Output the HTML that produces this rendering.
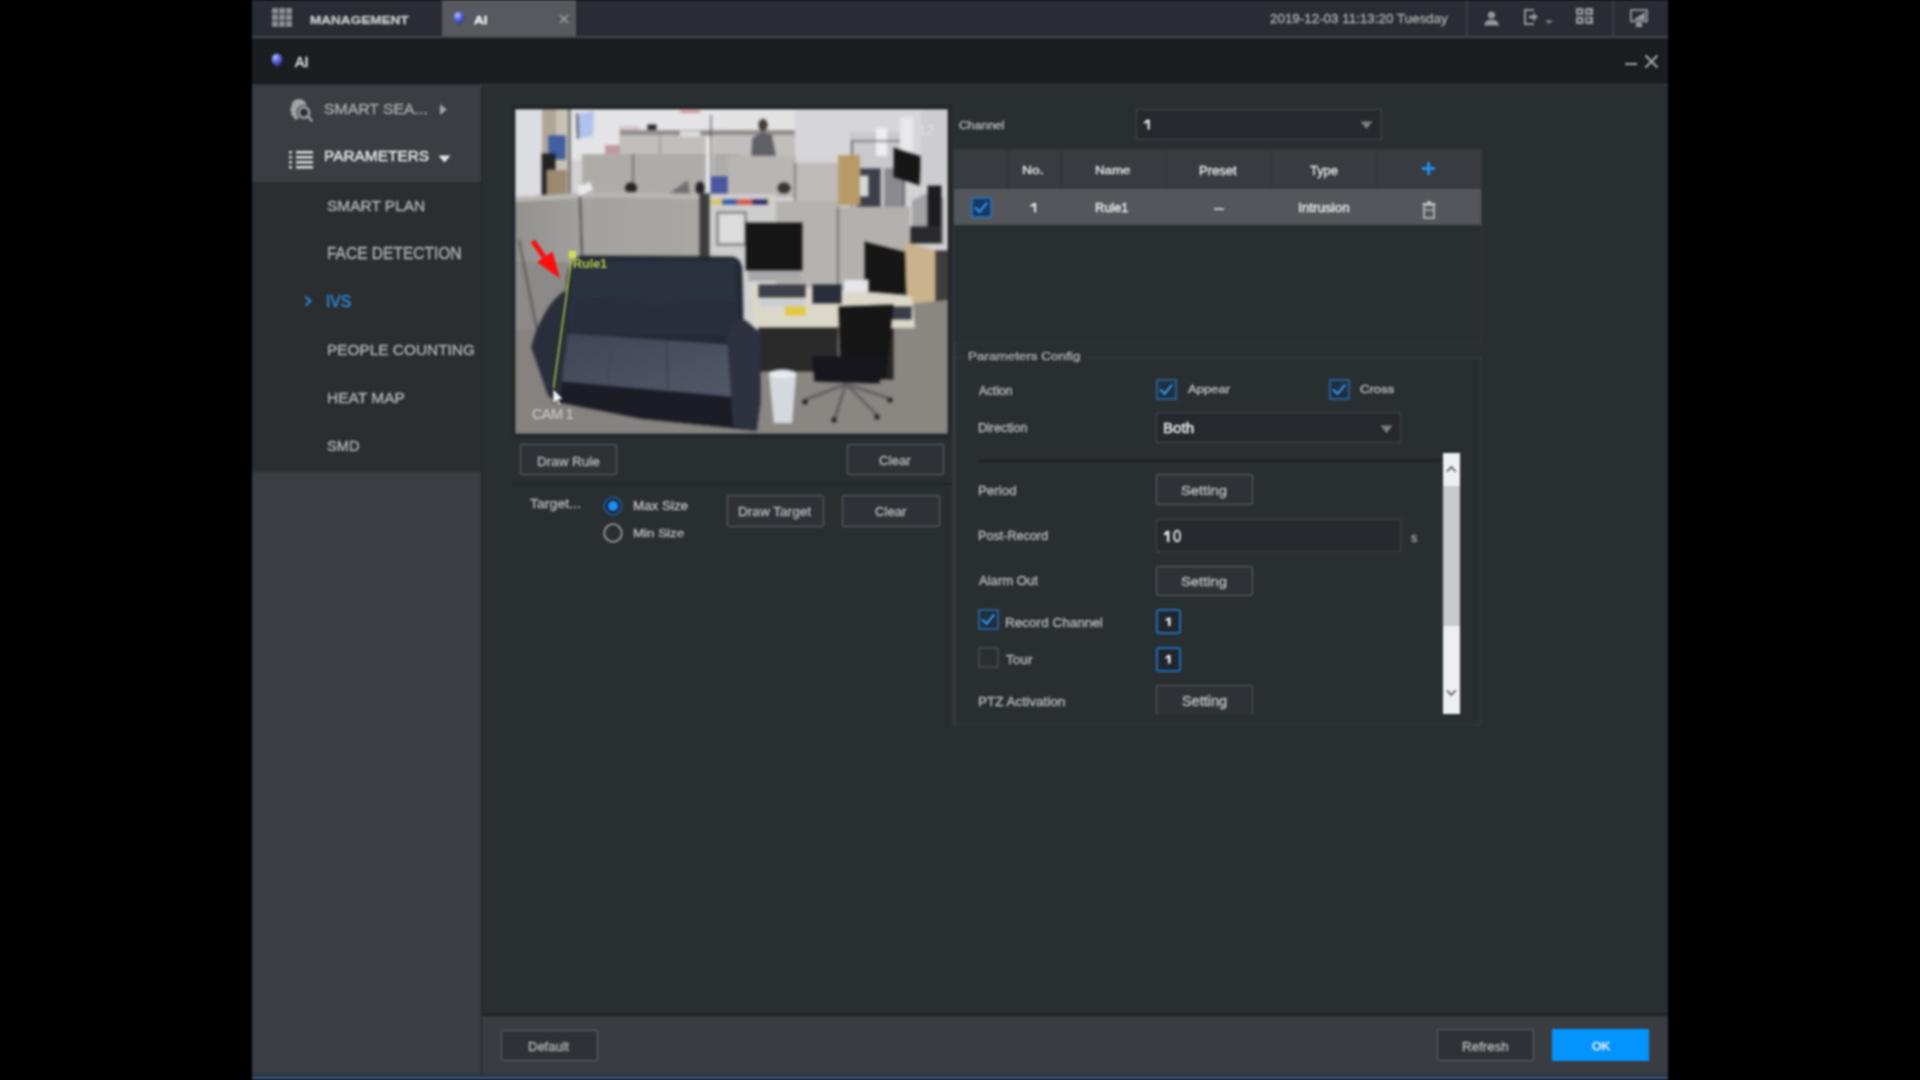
<!DOCTYPE html>
<html><head><meta charset="utf-8"><title>AI</title>
<style>
html,body{margin:0;padding:0;width:1920px;height:1080px;overflow:hidden;background:#000;}
body{position:relative;font-family:"Liberation Sans",sans-serif;}
.a{position:absolute;}
.t{white-space:nowrap;-webkit-text-stroke:0.4px currentColor;}
#root{position:absolute;left:0;top:0;width:1920px;height:1080px;filter:blur(0.8px);}
</style></head><body><div id="root">
<div class="a" style="left:0px;top:0px;width:1920px;height:1080px;background:#000;"></div>
<div class="a" style="left:252px;top:0px;width:1416px;height:36px;background:#292c33;"></div>
<div class="a" style="left:252px;top:36px;width:1416px;height:2px;background:#45484d;"></div>
<div class="a" style="left:442px;top:0px;width:134px;height:36px;background:#57595e;"></div>
<div class="a" style="left:252px;top:38px;width:1416px;height:46px;background:#1b1e21;"></div>
<div class="a" style="left:252px;top:84px;width:1416px;height:2px;background:#33363b;"></div>
<div class="a" style="left:252px;top:86px;width:229px;height:96px;background:#3a3d42;"></div>
<div class="a" style="left:252px;top:182px;width:229px;height:290px;background:#2a2e31;"></div>
<div class="a" style="left:252px;top:472px;width:229px;height:608px;background:#3a3d42;"></div>
<div class="a" style="left:480.5px;top:86px;width:3.0px;height:994px;background:#222629;"></div>
<div class="a" style="left:482px;top:86px;width:1186px;height:927px;background:#292e31;"></div>
<div class="a" style="left:482px;top:1013px;width:1186px;height:3px;background:#1f2226;"></div>
<div class="a" style="left:482px;top:1016px;width:1186px;height:58px;background:#393c41;"></div>
<div class="a" style="left:252px;top:1072.5px;width:1416px;height:1.5px;background:#36383b;"></div>
<div class="a" style="left:252px;top:1074px;width:1416px;height:2.5px;background:#2b3745;"></div>
<div class="a" style="left:252px;top:1076.5px;width:1416px;height:2.0px;background:#3b5878;"></div>
<div class="a" style="left:252px;top:1078.5px;width:1416px;height:1.5px;background:#15304f;"></div>
<svg class="a" style="left:272px;top:8px;" width="21" height="20" viewBox="0 0 21 20"><rect x="0" y="0.0" width="6" height="5.6" fill="#8c8e92"/><rect x="7" y="0.0" width="6" height="5.6" fill="#8c8e92"/><rect x="14" y="0.0" width="6" height="5.6" fill="#8c8e92"/><rect x="0" y="6.6" width="6" height="5.6" fill="#8c8e92"/><rect x="7" y="6.6" width="6" height="5.6" fill="#8c8e92"/><rect x="14" y="6.6" width="6" height="5.6" fill="#8c8e92"/><rect x="0" y="13.2" width="6" height="5.6" fill="#8c8e92"/><rect x="7" y="13.2" width="6" height="5.6" fill="#8c8e92"/><rect x="14" y="13.2" width="6" height="5.6" fill="#8c8e92"/></svg>
<div class="a t" style="left:309.95px;top:15.06px;font-size:10.87px;line-height:10.87px;color:#c2c2c4;transform:scaleX(1.2484);transform-origin:0 0;font-weight:bold;">MANAGEMENT</div>
<svg class="a" style="left:453px;top:11px;" width="12" height="16" viewBox="0 0 12 16"><defs><radialGradient id="bg1" cx="0.35" cy="0.3" r="0.8"><stop offset="0" stop-color="#b8c0ff"/><stop offset="0.5" stop-color="#5a63d8"/><stop offset="1" stop-color="#2a2f90"/></radialGradient></defs><ellipse cx="6" cy="6.5" rx="5.5" ry="6" fill="url(#bg1)"/><path d="M4.5 12 L6 15 L7 12 Z" fill="#3a3fa0"/></svg>
<div class="a t" style="left:474.49px;top:15.98px;font-size:10.14px;line-height:10.14px;color:#ececec;transform:scaleX(1.3362);transform-origin:0 0;font-weight:bold;">AI</div>
<svg class="a" style="left:559px;top:14px;" width="10" height="10" viewBox="0 0 10 10"><path d="M1 1 L9 9 M9 1 L1 9" stroke="#a0a0a2" stroke-width="1.6"/></svg>
<div class="a t" style="left:1270.23px;top:12.21px;font-size:13.04px;line-height:13.04px;color:#a9a9ab;transform:scaleX(1.0276);transform-origin:0 0;">2019-12-03 11:13:20 Tuesday</div>
<div class="a" style="left:1466px;top:0px;width:2px;height:36px;background:#3a3d42;"></div>
<div class="a" style="left:1612px;top:0px;width:2px;height:36px;background:#3a3d42;"></div>
<svg class="a" style="left:1483px;top:10px;" width="17" height="17" viewBox="0 0 17 17"><circle cx="8.5" cy="5" r="3.6" fill="#96979b"/><path d="M1 15.5 Q2 9.5 8.5 9.5 Q15 9.5 16 15.5 Z" fill="#96979b"/></svg>
<svg class="a" style="left:1523px;top:8px;" width="32" height="18" viewBox="0 0 32 18"><path d="M11 2 H2 V16 H11" fill="none" stroke="#96979b" stroke-width="2"/><path d="M6 7.5 H10 V4.5 L15 9 L10 13.5 V10.5 H6 Z" fill="#96979b"/><path d="M22 12.5 H30 L26 15.5 Z" fill="#96979b"/></svg>
<svg class="a" style="left:1576px;top:8px;" width="17" height="16" viewBox="0 0 17 16"><rect x="0" y="0" width="17" height="16" fill="#96979b"/><rect x="7.5" y="0" width="1.6" height="16" fill="#292c33"/><rect x="0" y="7" width="17" height="1.6" fill="#292c33"/><rect x="2.5" y="2.5" width="2.5" height="2.5" fill="#292c33"/><rect x="11.5" y="2.5" width="2.5" height="2.5" fill="#292c33"/><rect x="2.5" y="11" width="2.5" height="2.5" fill="#292c33"/><rect x="11" y="10.5" width="3" height="3" fill="#292c33"/></svg>
<svg class="a" style="left:1629px;top:8px;" width="20" height="20" viewBox="0 0 20 20"><rect x="2" y="2" width="16" height="11.5" fill="none" stroke="#96979b" stroke-width="1.8"/><path d="M4 12 L16 4 V12 Z" fill="#96979b"/><path d="M7.5 14.5 H12.5 L13.5 19 H6.5 Z" fill="#96979b"/></svg>
<svg class="a" style="left:271px;top:53px;" width="13" height="17" viewBox="0 0 13 17"><defs><radialGradient id="bg2" cx="0.35" cy="0.3" r="0.8"><stop offset="0" stop-color="#b8c0ff"/><stop offset="0.5" stop-color="#5a63d8"/><stop offset="1" stop-color="#2a2f90"/></radialGradient></defs><ellipse cx="6" cy="6.5" rx="5.5" ry="6" fill="url(#bg2)"/><path d="M4.5 12 L6 15 L7 12 Z" fill="#3a3fa0"/></svg>
<div class="a t" style="left:294.90px;top:54.85px;font-size:14.06px;line-height:14.06px;color:#e4e4e4;transform:scaleX(1.0210);transform-origin:0 0;">AI</div>
<div class="a" style="left:1625px;top:62.5px;width:12px;height:2.0px;background:#a0a0a2;"></div>
<svg class="a" style="left:1644px;top:54px;" width="15" height="15" viewBox="0 0 15 15"><path d="M1.5 1.5 L13.5 13.5 M13.5 1.5 L1.5 13.5" stroke="#a8a8aa" stroke-width="2"/></svg>
<svg class="a" style="left:289px;top:98px;" width="25" height="25" viewBox="0 0 25 25"><path d="M9.5 1 Q16.5 1 17.5 7.5 L17 9 Q11.5 8.5 9.5 13 Q8.5 17 10.5 20.5 L5.5 21.5 Q5.5 19 3.5 18 Q1.5 17 2.5 14 L1 12 Q2.5 10 2.5 8 Q3 1.5 9.5 1 Z" fill="#a2a3a6"/><circle cx="15" cy="14.5" r="7.6" fill="#3a3d42"/><circle cx="15" cy="14.5" r="5.2" fill="#2f3236" stroke="#a2a3a6" stroke-width="2.4"/><path d="M19 18.5 L22.5 22.5" stroke="#a2a3a6" stroke-width="2.6" stroke-linecap="round"/></svg>
<div class="a t" style="left:324.11px;top:101.85px;font-size:14.06px;line-height:14.06px;color:#a6a7a9;transform:scaleX(1.1233);transform-origin:0 0;">SMART SEA...</div>
<svg class="a" style="left:439px;top:103px;" width="9" height="13" viewBox="0 0 9 13"><path d="M1 1 L8 6.5 L1 12 Z" fill="#a2a3a6"/></svg>
<svg class="a" style="left:289px;top:150px;" width="25" height="20" viewBox="0 0 25 20"><rect x="0" y="1" width="3" height="2.5" fill="#d8d8d8"/><rect x="7" y="1" width="17" height="2.5" fill="#e0e0e0"/><rect x="0" y="6" width="3" height="2.5" fill="#d8d8d8"/><rect x="7" y="6" width="17" height="2.5" fill="#e0e0e0"/><rect x="0" y="11" width="3" height="2.5" fill="#d8d8d8"/><rect x="7" y="11" width="17" height="2.5" fill="#e0e0e0"/><rect x="0" y="16" width="3" height="2.5" fill="#d8d8d8"/><rect x="7" y="16" width="17" height="2.5" fill="#e0e0e0"/></svg>
<div class="a t" style="left:323.67px;top:148.42px;font-size:15.51px;line-height:15.51px;color:#e8e8e8;transform:scaleX(0.9948);transform-origin:0 0;">PARAMETERS</div>
<svg class="a" style="left:438px;top:155px;" width="13" height="8" viewBox="0 0 13 8"><path d="M0.5 0.5 H12.5 L6.5 7.5 Z" fill="#e6e6e6"/></svg>
<div class="a t" style="left:327.13px;top:198.67px;font-size:14.57px;line-height:14.57px;color:#b0b1b3;transform:scaleX(1.0619);transform-origin:0 0;">SMART PLAN</div>
<div class="a t" style="left:326.66px;top:245.30px;font-size:16.23px;line-height:16.23px;color:#b0b1b3;transform:scaleX(0.9570);transform-origin:0 0;">FACE DETECTION</div>
<div class="a t" style="left:326.67px;top:342.42px;font-size:15.51px;line-height:15.51px;color:#b0b1b3;transform:scaleX(0.9925);transform-origin:0 0;">PEOPLE COUNTING</div>
<div class="a t" style="left:326.66px;top:390.42px;font-size:15.51px;line-height:15.51px;color:#b0b1b3;transform:scaleX(1.0022);transform-origin:0 0;">HEAT MAP</div>
<div class="a t" style="left:327.17px;top:438.42px;font-size:15.51px;line-height:15.51px;color:#b0b1b3;transform:scaleX(0.9446);transform-origin:0 0;">SMD</div>
<div class="a t" style="left:326.49px;top:293.30px;font-size:16.23px;line-height:16.23px;color:#2e8bd6;transform:scaleX(0.9657);transform-origin:0 0;">IVS</div>
<svg class="a" style="left:304px;top:295px;" width="9" height="12" viewBox="0 0 9 12"><path d="M1.5 1.5 L6.5 6 L1.5 10.5" fill="none" stroke="#2e8bd6" stroke-width="2"/></svg>
<div class="a" style="left:512px;top:104.5px;width:439.5px;height:333.0px;background:#24272b;"></div>
<svg class="a" style="left:515px;top:109px;" width="433" height="325" viewBox="0 0 433 325"><defs><filter id="cb" x="-5%" y="-5%" width="110%" height="110%"><feGaussianBlur stdDeviation="1.3"/></filter><clipPath id="cc"><rect x="0" y="0" width="433" height="325"/></clipPath></defs><g clip-path="url(#cc)"><g transform="translate(-515,-109)"><g filter="url(#cb)"><rect x="515" y="109" width="433" height="325" fill="#d2d2d3" /><rect x="515" y="109" width="433" height="51" fill="#e2e2e3" /><rect x="515" y="109" width="27" height="91" fill="#dcdde0" /><rect x="542" y="109" width="14" height="88" fill="#aea696" /><rect x="556" y="109" width="12" height="88" fill="#c8c2b4" /><rect x="568" y="109" width="3" height="88" fill="#6a6a6a" /><rect x="548" y="135" width="18" height="25" fill="#4060a0" /><rect x="541" y="153" width="15" height="43" fill="#222222" /><rect x="547" y="170" width="20" height="26" fill="#9a8a70" /><rect x="571" y="109" width="149" height="47" fill="#e4e4e6" /><polygon points="576,114 594,111 593,136 577,139" fill="#b0c3ee" /><line x1="577" y1="113" x2="578" y2="139" stroke="#3a3e4a" stroke-width="2.2" /><rect x="619" y="126" width="21" height="24" fill="#d8c4cc" /><rect x="605" y="145" width="20" height="13" fill="#c09aa0" /><rect x="680" y="110" width="20" height="3" fill="#d88a90" /><rect x="620" y="130" width="252" height="26" fill="#c1bfbc" /><rect x="620" y="130" width="252" height="5" fill="#8e8c8a" /><line x1="660" y1="130" x2="660" y2="156" stroke="#8a8886" stroke-width="1.2" /><rect x="647" y="124" width="10" height="6" fill="#202020" /><rect x="680" y="131" width="20" height="6" fill="#dadada" /><polygon points="751,160 752,138 762,132 772,135 777,160" fill="#5e6066" /><ellipse cx="763" cy="125" rx="5" ry="6.5" fill="#4a3b30"/><rect x="795" y="109" width="153" height="51" fill="#d6d6d8" /><rect x="582" y="154" width="158" height="41" fill="#aeaca9" /><line x1="633" y1="154" x2="633" y2="195" stroke="#5a5856" stroke-width="1.6" /><rect x="728" y="156" width="68" height="41" fill="#b8b6b3" /><rect x="795" y="163" width="55" height="43" fill="#bdbbb8" /><line x1="795" y1="163" x2="795" y2="206" stroke="#6a6866" stroke-width="1.6" /><ellipse cx="631" cy="188" rx="6.5" ry="6" fill="#252220"/><ellipse cx="784" cy="188" rx="7" ry="6" fill="#3a3430"/><polygon points="668,194 688,180 690,195" fill="#707072" /><ellipse cx="700" cy="188" rx="5" ry="7" fill="#242426"/><rect x="706" y="137" width="7" height="58" fill="#e8e8ea" /><line x1="711" y1="115" x2="711" y2="190" stroke="#4a4a40" stroke-width="1.5" /><rect x="710" y="176" width="18" height="19" fill="#4c56a0" /><rect x="850" y="132" width="56" height="84" fill="#c9c9cc" /><rect x="856" y="168" width="25" height="44" fill="#3c404c" /><rect x="860" y="176" width="8" height="20" fill="#d8d8dc" /><rect x="884" y="168" width="21" height="46" fill="#8a8a8e" /><rect x="876" y="128" width="11" height="28" fill="#eeeef0" /><line x1="852" y1="140" x2="852" y2="216" stroke="#55555a" stroke-width="2" /><line x1="904" y1="140" x2="904" y2="216" stroke="#55555a" stroke-width="1.6" /><line x1="852" y1="141" x2="904" y2="141" stroke="#55555a" stroke-width="1.6" /><rect x="838" y="155" width="22" height="50" fill="#b89a66" /><polygon points="893,147 921,156 920,186 893,177" fill="#151515" /><polygon points="928,185 942,190 942,214 928,208" fill="#1c1c1c" /><rect x="921" y="109" width="27" height="76" fill="#cdcdcf" /><rect x="900" y="117" width="13" height="35" fill="#e8e8ea" /><polygon points="893,147 921,156 920,186 893,177" fill="#151515" /><polygon points="912,200 930,192 944,198 944,244 912,244" fill="#a2a2a4" /><rect x="927" y="185" width="15" height="41" fill="#1e1e20" /><rect x="910" y="226" width="32" height="18" fill="#2a2a2e" /><defs><linearGradient id="fpg" x1="0" y1="0" x2="1" y2="0"><stop offset="0" stop-color="#92918f"/><stop offset="0.4" stop-color="#a4a29f"/><stop offset="1" stop-color="#a9a7a4"/></linearGradient></defs><polygon points="515,197 600,192 700,194 700,262 515,262" fill="url(#fpg)" /><polygon points="515,197 600,192 700,194 700,199 600,197 515,202" fill="#b9b7b4" /><rect x="699" y="193" width="11" height="69" fill="#3e3e40" /><polygon points="577,187 590,182 593,190 579,196" fill="#eaeaec" /><line x1="580" y1="196" x2="582" y2="258" stroke="#262626" stroke-width="1.8" /><rect x="710" y="194" width="66" height="68" fill="#cdcdce" /><rect x="711" y="199" width="59" height="6" fill="#d8c860" /><rect x="722" y="199" width="15" height="6" fill="#2f60aa" /><rect x="737" y="199" width="15" height="6" fill="#d85a4a" /><rect x="752" y="199" width="16" height="6" fill="#2a2a6a" /><rect x="716" y="211" width="31" height="35" fill="#8a8a8c" /><rect x="719" y="214" width="25" height="29" fill="#dcdcdc" /><rect x="776" y="201" width="62" height="99" fill="#b5b3af" /><rect x="838" y="207" width="72" height="93" fill="#b3b1ad" /><line x1="838" y1="207" x2="838" y2="300" stroke="#6a6866" stroke-width="2" /><rect x="745" y="222" width="58" height="49" fill="#121212" /><rect x="748" y="271" width="53" height="10" fill="#a8a8aa" /><polygon points="864,241 907,252 907,296 864,292" fill="#161616" /><polygon points="905,242 935,250 936,318 907,308" fill="#c9b28c" /><rect x="935" y="250" width="13" height="72" fill="#3c3c3e" /><polygon points="515,262 570,262 566,290 532,345 548,400 515,400" fill="#8b8a88" /><line x1="519" y1="240" x2="537" y2="330" stroke="#3e3e3e" stroke-width="1.6" /><polygon points="515,330 540,330 548,400 560,404 640,420 760,434 515,434" fill="#85827f" /><rect x="540" y="395" width="220" height="39" fill="#85827f" /><polygon points="758,320 948,300 948,434 758,434" fill="#8a8682" /><polygon points="752,283 912,296 915,328 753,327" fill="#dcd8c9" /><rect x="758" y="284" width="48" height="14" fill="#3c404c" /><rect x="760" y="300" width="45" height="6" fill="#c8ccd4" /><rect x="812" y="284" width="30" height="20" fill="#2a2e3a" /><rect x="844" y="280" width="24" height="12" fill="#e4e6ea" /><rect x="785" y="306" width="21" height="10" fill="#e2ca40" /><rect x="888" y="306" width="24" height="14" fill="#3a3e4a" /><rect x="758" y="327" width="80" height="45" fill="#2a2a2c" /><rect x="880" y="328" width="14" height="52" fill="#262628" /><polygon points="838,306 894,304 886,378 840,376" fill="#141416" /><polygon points="812,356 882,356 880,384 814,382" fill="#19191b" /><line x1="846" y1="384" x2="805" y2="400" stroke="#5e5e60" stroke-width="3" /><line x1="846" y1="384" x2="877" y2="415" stroke="#5e5e60" stroke-width="3" /><line x1="846" y1="384" x2="888" y2="398" stroke="#5e5e60" stroke-width="3" /><line x1="846" y1="384" x2="835" y2="418" stroke="#5e5e60" stroke-width="3" /><circle cx="805" cy="402" r="3" fill="#202020"/><circle cx="877" cy="417" r="3" fill="#202020"/><circle cx="890" cy="400" r="3" fill="#202020"/><circle cx="834" cy="420" r="3" fill="#202020"/><polygon points="769,374 796,374 792,423 774,423" fill="#d5d9de" /><ellipse cx="782.5" cy="374" rx="13.5" ry="4" fill="#e8ecf0"/><path d="M566 290 Q566 258 582 255 L733 256 Q742 258 743 270 L744 322 L760 332 L761 400 L757 431 L641 419 L560 403 L548 396 L531 347 Q540 310 566 290 Z" fill="#262b36"/><path d="M572 262 L735 261 L738 330 L570 333 Z" fill="#2c3140"/><path d="M575 300 Q620 292 655 306 Q700 294 736 302 L736 334 L572 334 Z" fill="#292e3b"/><defs><linearGradient id="seatg" x1="0" y1="0" x2="1" y2="1"><stop offset="0" stop-color="#3f4555"/><stop offset="1" stop-color="#535969"/></linearGradient></defs><path d="M560 333 L731 345 L737 397 L556 381 Z" fill="url(#seatg)"/><line x1="666" y1="340" x2="668" y2="390" stroke="#363c4a" stroke-width="1.3" /><line x1="612" y1="353" x2="607" y2="380" stroke="#3a404e" stroke-width="1.0" /><path d="M556 381 L737 397 L757 400 L757 431 L641 419 L560 403 Z" fill="#1d1f25"/><path d="M531 347 Q545 300 566 290 L572 298 L563 372 L560 403 L548 396 Z" fill="#2a2f3a"/><path d="M727 338 Q735 318 746 320 L760 332 L761 400 L757 431 L733 426 Z" fill="#2e3340"/></g><g filter="url(#sb)"><line x1="572" y1="256" x2="553.5" y2="388" stroke="#a6c43e" stroke-width="1.6"/><rect x="569.5" y="251.5" width="6" height="6" fill="#c8e048" stroke="#d8f060" stroke-width="1"/><line x1="533" y1="241" x2="544" y2="257" stroke="#ff0a0a" stroke-width="5"/><polygon points="537,262 552.5,251.5 560,278.5" fill="#ff0a0a"/><text x="573" y="267.5" font-family="Liberation Sans" font-size="12.5" font-weight="bold" fill="#b4cc44">Rule1</text><text x="532" y="418.5" font-family="Liberation Sans" font-size="14.5" fill="#d2cecb" letter-spacing="-0.6">CAM 1</text><polygon points="553,389 553,404 556.5,400.5 559,406 561,405 558.5,399.5 563,399" fill="#f4f4f4" stroke="#222" stroke-width="0.6"/><text x="919" y="135" font-family="Liberation Sans" font-size="14" fill="#ececec" fill-opacity="0.55">12</text></g></g></g><defs><filter id="sb"><feGaussianBlur stdDeviation="0.45"/></filter></defs></svg>
<div class="a" style="left:952px;top:343px;width:3.5px;height:382px;background:#35383f;"></div>
<div class="a" style="left:520px;top:444px;width:97px;height:31px;background:#2e3236;box-sizing:border-box;border:1.5px solid #5f6368;border-radius:2px;"></div>
<div class="a t" style="left:536.82px;top:455.63px;font-size:12.32px;line-height:12.32px;color:#b2b3b5;transform:scaleX(1.0919);transform-origin:0 0;">Draw Rule</div>
<div class="a" style="left:847px;top:444px;width:97px;height:31px;background:#2e3236;box-sizing:border-box;border:1.5px solid #5f6368;border-radius:2px;"></div>
<div class="a t" style="left:878.74px;top:455.38px;font-size:12.61px;line-height:12.61px;color:#b2b3b5;transform:scaleX(1.0518);transform-origin:0 0;">Clear</div>
<div class="a" style="left:512px;top:483px;width:440px;height:2px;background:#212428;"></div>
<div class="a t" style="left:530.02px;top:497.84px;font-size:12.90px;line-height:12.90px;color:#b4b4b6;transform:scaleX(1.0920);transform-origin:0 0;">Target...</div>
<svg class="a" style="left:602px;top:495px;" width="22" height="22" viewBox="0 0 22 22"><circle cx="11" cy="11" r="8.8" fill="#142a42" stroke="#245a90" stroke-width="1.7"/><circle cx="11" cy="11" r="5" fill="#1d8ef2"/></svg>
<svg class="a" style="left:602px;top:522px;" width="22" height="22" viewBox="0 0 22 22"><circle cx="11" cy="11" r="8.8" fill="none" stroke="#9b9c9e" stroke-width="1.8"/></svg>
<div class="a t" style="left:632.58px;top:500.28px;font-size:12.03px;line-height:12.03px;color:#b8b8ba;transform:scaleX(1.1136);transform-origin:0 0;">Max Size</div>
<div class="a t" style="left:632.58px;top:527.22px;font-size:11.74px;line-height:11.74px;color:#b8b8ba;transform:scaleX(1.1354);transform-origin:0 0;">Min Size</div>
<div class="a" style="left:727px;top:495px;width:97px;height:32px;background:#2e3236;box-sizing:border-box;border:1.5px solid #5f6368;border-radius:2px;"></div>
<div class="a t" style="left:738.11px;top:505.58px;font-size:12.61px;line-height:12.61px;color:#b2b3b5;transform:scaleX(1.0780);transform-origin:0 0;">Draw Target</div>
<div class="a" style="left:842px;top:495px;width:98px;height:32px;background:#2e3236;box-sizing:border-box;border:1.5px solid #5f6368;border-radius:2px;"></div>
<div class="a t" style="left:874.74px;top:505.58px;font-size:12.61px;line-height:12.61px;color:#b2b3b5;transform:scaleX(1.0416);transform-origin:0 0;">Clear</div>
<div class="a t" style="left:958.89px;top:119.74px;font-size:11.59px;line-height:11.59px;color:#b5b6b8;transform:scaleX(1.0560);transform-origin:0 0;">Channel</div>
<div class="a" style="left:1136px;top:109px;width:246px;height:31px;background:#25282c;box-sizing:border-box;border:1.5px solid #42464b;"></div>
<svg class="a" style="left:0px;top:0px;pointer-events:none;" width="1920" height="1080" viewBox="0 0 1920 1080"><path d="M1147.50 119.40 L1149.70 119.40 L1149.70 129.50 L1147.50 129.50 L1147.50 122.43 L1144.00 123.64 L1144.00 121.82 Z" fill="#ececec"/></svg>
<svg class="a" style="left:1360px;top:121px;" width="13" height="9" viewBox="0 0 13 9"><path d="M0.5 0.5 H12.5 L6.5 8 Z" fill="#7d7f82"/></svg>
<div class="a" style="left:953px;top:149px;width:529px;height:194px;box-sizing:border-box;border:1.5px solid #35383d;"></div>
<div class="a" style="left:954px;top:150px;width:527px;height:39px;background:#383c40;"></div>
<div class="a" style="left:1007px;top:150px;width:1.5px;height:39px;background:#31343a;"></div>
<div class="a" style="left:1060px;top:150px;width:1.5px;height:39px;background:#31343a;"></div>
<div class="a" style="left:1165.5px;top:150px;width:1.5px;height:39px;background:#31343a;"></div>
<div class="a" style="left:1270.5px;top:150px;width:1.5px;height:39px;background:#31343a;"></div>
<div class="a" style="left:1375.5px;top:150px;width:1.5px;height:39px;background:#31343a;"></div>
<div class="a" style="left:954px;top:189px;width:527px;height:36px;background:#53565b;"></div>
<div class="a t" style="left:1022.29px;top:165.24px;font-size:11.59px;line-height:11.59px;color:#e3e3e5;transform:scaleX(1.1914);transform-origin:0 0;">No.</div>
<div class="a t" style="left:1094.54px;top:165.24px;font-size:11.59px;line-height:11.59px;color:#e3e3e5;transform:scaleX(1.1466);transform-origin:0 0;">Name</div>
<div class="a t" style="left:1199.25px;top:164.81px;font-size:12.46px;line-height:12.46px;color:#e3e3e5;transform:scaleX(1.0488);transform-origin:0 0;">Preset</div>
<div class="a t" style="left:1309.64px;top:164.81px;font-size:12.46px;line-height:12.46px;color:#e3e3e5;transform:scaleX(1.0343);transform-origin:0 0;">Type</div>
<svg class="a" style="left:1421px;top:161px;" width="15" height="15" viewBox="0 0 15 15"><path d="M7.5 1 V14 M1 7.5 H14" stroke="#1e8ff0" stroke-width="3"/></svg>
<svg class="a" style="left:971px;top:197px;" width="21" height="21" viewBox="0 0 21 21"><rect x="1" y="1" width="19" height="19" fill="#133a68" stroke="#2a79c2" stroke-width="1.5"/><path d="M4.2 10.5 L8.6 14.8 L16.1 5.7" fill="none" stroke="#3c9cf0" stroke-width="1.9"/></svg>
<svg class="a" style="left:0px;top:0px;pointer-events:none;" width="1920" height="1080" viewBox="0 0 1920 1080"><path d="M1034.10 202.90 L1036.10 202.90 L1036.10 212.30 L1034.10 212.30 L1034.10 205.72 L1030.30 206.85 L1030.30 205.16 Z" fill="#eeeeee"/></svg>
<div class="a t" style="left:1095.28px;top:202.01px;font-size:12.46px;line-height:12.46px;color:#eeeeee;transform:scaleX(1.0247);transform-origin:0 0;">Rule1</div>
<div class="a" style="left:1214px;top:208px;width:10px;height:2px;background:#c8c8c8;"></div>
<div class="a t" style="left:1298.43px;top:201.76px;font-size:12.75px;line-height:12.75px;color:#eeeeee;transform:scaleX(1.0600);transform-origin:0 0;">Intrusion</div>
<svg class="a" style="left:1422px;top:200px;" width="14" height="19" viewBox="0 0 14 19"><rect x="2" y="5" width="10" height="13" fill="none" stroke="#c0c1c3" stroke-width="1.6"/><rect x="0.5" y="3" width="13" height="2" fill="#c0c1c3"/><rect x="5" y="1" width="4" height="2" fill="#c0c1c3"/><path d="M2 10 H12" stroke="#c0c1c3" stroke-width="1.2"/></svg>
<div class="a" style="left:954px;top:357px;width:527px;height:368px;box-sizing:border-box;border:1.5px solid #393c41;"></div>
<div class="a" style="left:964px;top:350px;width:120px;height:16px;background:#292e31;"></div>
<div class="a t" style="left:967.62px;top:351.44px;font-size:11.59px;line-height:11.59px;color:#a9aaac;transform:scaleX(1.1626);transform-origin:0 0;">Parameters Config</div>
<div class="a t" style="left:979.20px;top:385.70px;font-size:11.88px;line-height:11.88px;color:#b5b6b8;transform:scaleX(1.0153);transform-origin:0 0;">Action</div>
<svg class="a" style="left:1156px;top:379px;" width="21" height="21" viewBox="0 0 21 21"><rect x="1" y="1" width="19" height="19" fill="#1e2f40" stroke="#2a6fb0" stroke-width="1.5"/><path d="M4.2 10.5 L8.6 14.8 L16.1 5.7" fill="none" stroke="#3c9cf0" stroke-width="1.9"/></svg>
<div class="a t" style="left:1187.60px;top:383.69px;font-size:11.30px;line-height:11.30px;color:#b8b9bb;transform:scaleX(1.1547);transform-origin:0 0;">Appear</div>
<svg class="a" style="left:1329px;top:379px;" width="21" height="21" viewBox="0 0 21 21"><rect x="1" y="1" width="19" height="19" fill="#1e2f40" stroke="#2a6fb0" stroke-width="1.5"/><path d="M4.2 10.5 L8.6 14.8 L16.1 5.7" fill="none" stroke="#3c9cf0" stroke-width="1.9"/></svg>
<div class="a t" style="left:1360.44px;top:383.69px;font-size:11.30px;line-height:11.30px;color:#b8b9bb;transform:scaleX(1.1608);transform-origin:0 0;">Cross</div>
<div class="a t" style="left:978.20px;top:422.50px;font-size:11.88px;line-height:11.88px;color:#b5b6b8;transform:scaleX(1.0563);transform-origin:0 0;">Direction</div>
<div class="a" style="left:1156px;top:412px;width:245px;height:31px;background:#25282c;box-sizing:border-box;border:1.5px solid #42464b;"></div>
<div class="a t" style="left:1162.99px;top:420.24px;font-size:15.36px;line-height:15.36px;color:#ededed;transform:scaleX(0.9849);transform-origin:0 0;">Both</div>
<svg class="a" style="left:1380px;top:425px;" width="13" height="9" viewBox="0 0 13 9"><path d="M0.5 0.5 H12.5 L6.5 8 Z" fill="#7d7f82"/></svg>
<div class="a" style="left:979px;top:459px;width:462px;height:2.5px;background:#1f2226;"></div>
<div class="a t" style="left:978.23px;top:483.89px;font-size:13.19px;line-height:13.19px;color:#b5b6b8;transform:scaleX(1.0147);transform-origin:0 0;">Period</div>
<div class="a" style="left:1156px;top:474px;width:97px;height:31px;background:#2e3236;box-sizing:border-box;border:1.5px solid #5f6368;border-radius:2px;"></div>
<div class="a t" style="left:1181.16px;top:484.56px;font-size:12.75px;line-height:12.75px;color:#bdbec0;transform:scaleX(1.1605);transform-origin:0 0;">Setting</div>
<div class="a t" style="left:978.29px;top:529.19px;font-size:13.19px;line-height:13.19px;color:#b5b6b8;transform:scaleX(0.9545);transform-origin:0 0;">Post-Record</div>
<div class="a" style="left:1156px;top:519px;width:245px;height:33px;background:#26292d;box-sizing:border-box;border:1.5px solid #42464b;"></div>
<svg class="a" style="left:0px;top:0px;pointer-events:none;" width="1920" height="1080" viewBox="0 0 1920 1080"><path d="M1167.00 530.80 L1169.30 530.80 L1169.30 542.00 L1167.00 542.00 L1167.00 534.16 L1163.90 535.50 L1163.90 533.49 Z" fill="#ededed"/></svg>
<div class="a t" style="left:1172.51px;top:528.54px;font-size:16.00px;line-height:16.00px;color:#ededed;transform:scaleX(0.9245);transform-origin:0 0;">0</div>
<div class="a t" style="left:1411.34px;top:531.02px;font-size:13.00px;line-height:13.00px;color:#a8a8aa;transform:scaleX(0.9302);transform-origin:0 0;">s</div>
<div class="a t" style="left:979.30px;top:575.41px;font-size:12.46px;line-height:12.46px;color:#b5b6b8;transform:scaleX(1.0489);transform-origin:0 0;">Alarm Out</div>
<div class="a" style="left:1156px;top:565.5px;width:97px;height:30.5px;background:#2e3236;box-sizing:border-box;border:1.5px solid #5f6368;border-radius:2px;"></div>
<div class="a t" style="left:1181.16px;top:575.56px;font-size:12.75px;line-height:12.75px;color:#bdbec0;transform:scaleX(1.1605);transform-origin:0 0;">Setting</div>
<svg class="a" style="left:978px;top:609px;" width="21" height="21" viewBox="0 0 21 21"><rect x="1" y="1" width="19" height="19" fill="#1e2f40" stroke="#2a6fb0" stroke-width="1.5"/><path d="M4.2 10.5 L8.6 14.8 L16.1 5.7" fill="none" stroke="#3c9cf0" stroke-width="1.9"/></svg>
<div class="a t" style="left:1005.12px;top:615.89px;font-size:13.19px;line-height:13.19px;color:#b5b6b8;transform:scaleX(1.0271);transform-origin:0 0;">Record Channel</div>
<div class="a" style="left:1155.5px;top:608.5px;width:25.0px;height:25.0px;background:#20262e;box-sizing:border-box;border:2px solid #1f6fb5;border-radius:3px;"></div>
<svg class="a" style="left:0px;top:0px;pointer-events:none;" width="1920" height="1080" viewBox="0 0 1920 1080"><path d="M1168.10 617.50 L1170.50 617.50 L1170.50 626.00 L1168.10 626.00 L1168.10 620.05 L1165.50 621.07 L1165.50 619.54 Z" fill="#f0f0f0"/></svg>
<svg class="a" style="left:978px;top:647px;" width="22" height="22" viewBox="0 0 22 22"><rect x="1" y="1" width="19" height="19" fill="none" stroke="#45484d" stroke-width="1.8"/></svg>
<div class="a t" style="left:1006.23px;top:654.35px;font-size:12.17px;line-height:12.17px;color:#b5b6b8;transform:scaleX(1.1182);transform-origin:0 0;">Tour</div>
<div class="a" style="left:1155.5px;top:646.5px;width:25.0px;height:25.0px;background:#20262e;box-sizing:border-box;border:2px solid #1f6fb5;border-radius:3px;"></div>
<svg class="a" style="left:0px;top:0px;pointer-events:none;" width="1920" height="1080" viewBox="0 0 1920 1080"><path d="M1168.10 655.10 L1170.50 655.10 L1170.50 663.50 L1168.10 663.50 L1168.10 657.62 L1165.50 658.63 L1165.50 657.12 Z" fill="#f0f0f0"/></svg>
<div class="a t" style="left:978.22px;top:695.63px;font-size:12.32px;line-height:12.32px;color:#b5b6b8;transform:scaleX(1.0991);transform-origin:0 0;">PTZ Activation</div>
<div class="a" style="left:1156px;top:685px;width:97px;height:29px;overflow:hidden;"><div class="a" style="left:0;top:0;width:97px;height:31px;box-sizing:border-box;border:1.5px solid #575b60;background:#2e3236;border-radius:2px;"></div><div class="a t" style="left:0;top:9.18px;width:97px;text-align:center;font-size:14.5px;line-height:14.5px;color:#bdbec0;">Setting</div></div>
<div class="a" style="left:1443px;top:452.5px;width:16.5px;height:261.5px;background:#eeeff1;"></div>
<div class="a" style="left:1443px;top:486px;width:16.5px;height:140px;background:#c8c9cc;"></div>
<svg class="a" style="left:1443px;top:462px;" width="17" height="14" viewBox="0 0 17 14"><path d="M4 9.5 L8.3 5 L12.6 9.5" fill="none" stroke="#55585c" stroke-width="1.8"/></svg>
<svg class="a" style="left:1443px;top:686px;" width="17" height="14" viewBox="0 0 17 14"><path d="M4 4.5 L8.3 9 L12.6 4.5" fill="none" stroke="#55585c" stroke-width="1.8"/></svg>
<div class="a" style="left:501px;top:1029.5px;width:97px;height:31.5px;background:#2e3236;box-sizing:border-box;border:1.5px solid #5f6368;border-radius:2px;"></div>
<div class="a t" style="left:528.06px;top:1040.56px;font-size:12.75px;line-height:12.75px;color:#b0b1b3;transform:scaleX(1.0183);transform-origin:0 0;">Default</div>
<div class="a" style="left:1437px;top:1029px;width:97px;height:32px;background:#2e3236;box-sizing:border-box;border:1.5px solid #5f6368;border-radius:2px;"></div>
<div class="a t" style="left:1461.83px;top:1040.01px;font-size:13.04px;line-height:13.04px;color:#b4b5b7;transform:scaleX(1.0245);transform-origin:0 0;">Refresh</div>
<div class="a" style="left:1552px;top:1029px;width:97px;height:32px;background:#0394fd;"></div>
<div class="a t" style="left:1591.58px;top:1040.79px;font-size:11.30px;line-height:11.30px;color:#f4f8ff;transform:scaleX(1.0962);transform-origin:0 0;">OK</div>
</div></body></html>
